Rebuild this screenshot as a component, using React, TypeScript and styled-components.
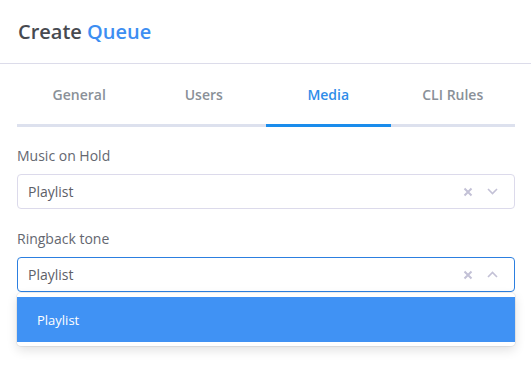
import React, { useState } from "react";
import styled, { createGlobalStyle } from "styled-components";

const GlobalStyle = createGlobalStyle`
  html, body {
    margin: 0;
    padding: 0;
    background: #fff;
    font-family: "Open Sans", "Liberation Sans", sans-serif;
  }
`;

const Panel = styled.div`
  width: 531px;
  height: 375px;
  background: #fff;
`;

const Header = styled.div`
  height: 64px;
  padding: 0 18px;
  display: flex;
  align-items: center;
  border-bottom: 1px solid #dcdcea;
  box-sizing: border-box;
`;

const Title = styled.h2`
  margin: 0;
  font-size: 20px;
  font-weight: 600;
  color: #474a50;
  span {
    color: #3d8ef2;
  }
`;

const Body = styled.div`
  padding: 0 16px 0 17px;
`;

const Tabs = styled.div`
  display: grid;
  grid-template-columns: repeat(4, 1fr);
  margin-bottom: 19px;
`;

const Tab = styled.div<{ $active?: boolean }>`
  height: 60px;
  display: flex;
  align-items: center;
  justify-content: center;
  font-size: 14px;
  font-weight: 600;
  color: ${(p) => (p.$active ? "#2f8de9" : "#8a9098")};
  border-bottom: 3px solid ${(p) => (p.$active ? "#1a8cec" : "#dde1ee")};
  cursor: pointer;
`;

const Field = styled.div`
  margin-bottom: 20px;
  position: relative;
`;

const Label = styled.div`
  font-size: 14px;
  color: #646770;
  margin-bottom: 8px;
  line-height: 20px;
`;

const Control = styled.div<{ $open?: boolean }>`
  height: 35px;
  box-sizing: border-box;
  border: 1px solid ${(p) => (p.$open ? "#2c7fe0" : "#dcdaeb")};
  border-radius: 4px;
  display: flex;
  align-items: center;
  padding: 0 10px 0 10px;
  font-size: 14px;
  color: #5d6068;
`;

const Value = styled.div`
  flex: 1;
`;

const IconBtn = styled.span`
  width: 24px;
  display: flex;
  justify-content: center;
  align-items: center;
  color: #c3c1d6;
`;

const Menu = styled.div`
  position: absolute;
  left: 0;
  right: 0;
  top: calc(100% + 1px);
  background: #fff;
  border-radius: 4px;
  box-shadow: 0 0 0 1px rgba(0, 0, 0, 0.06), 0 4px 11px rgba(0, 0, 0, 0.12);
  padding: 4px 0;
`;

const Option = styled.div<{ $selected?: boolean }>`
  height: 45px;
  display: flex;
  align-items: center;
  padding-left: 20px;
  font-size: 13px;
  color: ${(p) => (p.$selected ? "#fff" : "#5d6068")};
  background: ${(p) => (p.$selected ? "#4092f4" : "transparent")};
`;

const Cross = () => (
  <svg width="10" height="10" viewBox="0 0 10 10">
    <path d="M1.5 1.5l7 7M8.5 1.5l-7 7" stroke="currentColor" strokeWidth="2" />
  </svg>
);

const Chevron = ({ up }: { up?: boolean }) => (
  <svg width="11" height="7" viewBox="0 0 11 7">
    <path
      d={up ? "M1 6l4.5-4.5L10 6" : "M1 1l4.5 4.5L10 1"}
      stroke="currentColor"
      strokeWidth="1.6"
      fill="none"
    />
  </svg>
);

export default function App() {
  const [tab, setTab] = useState("Media");
  const tabs = ["General", "Users", "Media", "CLI Rules"];
  return (
    <Panel>
      <GlobalStyle />
      <Header>
        <Title>
          Create <span>Queue</span>
        </Title>
      </Header>
      <Body>
        <Tabs>
          {tabs.map((t) => (
            <Tab key={t} $active={t === tab} onClick={() => setTab(t)}>
              {t}
            </Tab>
          ))}
        </Tabs>
        <Field>
          <Label>Music on Hold</Label>
          <Control>
            <Value>Playlist</Value>
            <IconBtn>
              <Cross />
            </IconBtn>
            <IconBtn>
              <Chevron />
            </IconBtn>
          </Control>
        </Field>
        <Field>
          <Label>Ringback tone</Label>
          <Control $open>
            <Value>Playlist</Value>
            <IconBtn>
              <Cross />
            </IconBtn>
            <IconBtn>
              <Chevron up />
            </IconBtn>
          </Control>
          <Menu>
            <Option $selected>Playlist</Option>
          </Menu>
        </Field>
      </Body>
    </Panel>
  );
}
